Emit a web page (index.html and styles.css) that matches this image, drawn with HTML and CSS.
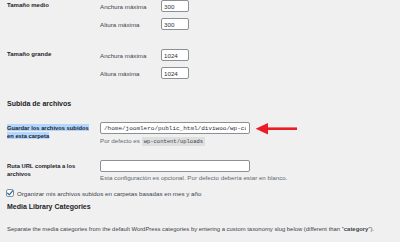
FILE: index.html
```html
<!DOCTYPE html>
<html lang="es">
<head>
<meta charset="utf-8">
<title>Ajustes de medios</title>
<link rel="stylesheet" href="styles.css">
</head>
<body>
<div class="page">
  <div class="size-group">
    <div class="size-label">Tamaño medio</div>
    <div class="size-fields">
      <div class="field"><span class="sub">Anchura máxima</span><input class="num" type="text" value="300" readonly></div>
      <div class="field"><span class="sub">Altura máxima</span><input class="num" type="text" value="300" readonly></div>
    </div>
  </div>
  <div class="size-group second">
    <div class="size-label">Tamaño grande</div>
    <div class="size-fields">
      <div class="field"><span class="sub">Anchura máxima</span><input class="num" type="text" value="1024" readonly></div>
      <div class="field"><span class="sub">Altura máxima</span><input class="num" type="text" value="1024" readonly></div>
    </div>
  </div>

  <h2 class="section-title first-title">Subida de archivos</h2>

  <div class="form-row row-path">
    <div class="row-label"><span class="selected">Guardar los archivos subidos<br>en esta carpeta</span></div>
    <div class="row-field">
      <input class="regular" type="text" value="/home/joomlero/public_html/diviwoo/wp-content/uploads" readonly>
      <p class="desc">Por defecto es <code>wp-content/uploads</code></p>
    </div>
  </div>

  <div class="form-row row-url">
    <div class="row-label">Ruta URL completa a los<br>archivos</div>
    <div class="row-field">
      <input class="regular" type="text" value="" readonly>
      <p class="desc">Esta configuración es opcional. Por defecto debería estar en blanco.</p>
    </div>
  </div>

  <label class="check-row">
    <span class="checkbox"><svg viewBox="0 0 8 8" width="8" height="8"><path d="M1.6 4.2 L3.3 5.8 L6.5 2" fill="none" stroke="#2271b1" stroke-width="1.2" stroke-linecap="round" stroke-linejoin="round"/></svg></span>
    <span>Organizar mis archivos subidos en carpetas basadas en mes y año</span>
  </label>

  <h2 class="section-title media-title">Media Library Categories</h2>
  <p class="note">Separate the media categories from the default WordPress categories by entering a custom taxonomy slug below (different than "<b>category</b>").</p>
</div>

<svg class="arrow" viewBox="0 0 43 14" width="43" height="14" aria-hidden="true">
  <path d="M12 5.4 H42 V8.0 H12 Z" fill="#ec1c24"/>
  <path d="M0.6 6.7 L13 1 L13 12.4 Z" fill="#ec1c24"/>
</svg>
</body>
</html>
```

FILE: styles.css
```css
html, body {
  margin: 0;
  padding: 0;
}
body {
  width: 400px;
  height: 242px;
  overflow: hidden;
  position: relative;
  background: #f0f0f1;
  font-family: "Liberation Sans", Arial, sans-serif;
  font-size: 6.2px;
  color: #1d2327;
}
.page {
  padding-left: 7px;
}
.size-group {
  display: grid;
  grid-template-columns: 93px 1fr;
}
.size-group.second {
  margin-top: 19px;
}
.size-label {
  font-weight: bold;
  font-size: 6px;
  line-height: 11px;
}
.size-fields {
  display: flex;
  flex-direction: column;
  gap: 6px;
}
.field {
  display: flex;
  align-items: center;
  height: 12px;
}
.sub {
  width: 61px;
  color: #3c434a;
}
input {
  box-sizing: border-box;
  margin: 0;
  height: 12px;
  border: 1px solid #8c8f94;
  border-radius: 2px;
  background: #fff;
  color: #2c3338;
  outline: none;
}
input.num {
  width: 28px;
  padding: 0 2px;
  font-family: "Liberation Sans", Arial, sans-serif;
  font-size: 6.2px;
}
input.regular {
  display: block;
  width: 150px;
  padding: 0 3px;
  font-family: "Liberation Mono", monospace;
  font-size: 6px;
}
.section-title {
  margin: 20px 0 0;
  font-size: 7px;
  font-weight: bold;
  line-height: 10px;
}
.form-row {
  display: grid;
  grid-template-columns: 93px 1fr;
}
.row-label {
  font-weight: bold;
  font-size: 5.8px;
  line-height: 8px;
}
.row-path {
  margin-top: 13px;
}
.row-path .row-label {
  padding-top: 1.7px;
}
.selected {
  background: #b3d7ff;
  padding: 0.5px 0;
}
.row-url {
  margin-top: 14px;
}
.row-url .row-label {
  padding-top: 1.5px;
}
.desc {
  margin: 3px 0 0;
  line-height: 8px;
  color: #646970;
}
.row-url .desc {
  margin-top: 2px;
}
code {
  font-family: "Liberation Mono", monospace;
  font-size: 5.5px;
  background: rgba(0, 0, 0, 0.07);
  padding: 1px 2px;
  color: #3c434a;
}
.check-row {
  display: flex;
  align-items: center;
  gap: 3px;
  margin-top: 7px;
  height: 8px;
  color: #3c434a;
}
.checkbox {
  display: flex;
  width: 8px;
  height: 8px;
  box-sizing: border-box;
  border: 1px solid #8c8f94;
  border-radius: 2px;
  background: #fff;
  align-items: center;
  justify-content: center;
  margin-left: -1px;
}
.checkbox svg {
  display: block;
  flex: none;
}
.media-title {
  margin-top: 5px;
}
.note {
  margin: 13px 0 0;
  font-size: 5.9px;
  line-height: 8px;
  color: #3c434a;
}
.arrow {
  position: absolute;
  left: 255px;
  top: 122px;
}
```
